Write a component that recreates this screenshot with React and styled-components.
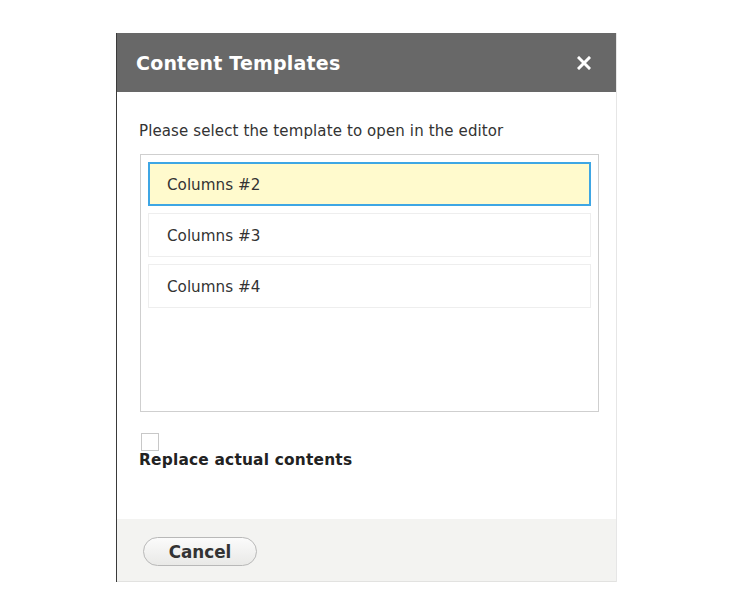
import React, { useState } from 'react';
import styled, { createGlobalStyle } from 'styled-components';

const GlobalStyle = createGlobalStyle`
  body {
    margin: 0;
    background: #fff;
    font-family: "DejaVu Sans", "Liberation Sans", sans-serif;
    color: #333;
  }
`

const Page = styled.div`
  padding: 33px 0 0 116px;
`

const Dialog = styled.div`
  width: 499px;
  background: #fff;
  border-left: 1px solid #3a3a3a;
  border-right: 1px solid #e6e6e6;
  display: flex;
  flex-direction: column;
`

const Header = styled.div`
  height: 59px;
  background: #686868;
  display: flex;
  align-items: center;
  justify-content: space-between;
  padding: 0 23px 0 19px;
`

const Title = styled.h1`
  margin: 0;
  font-size: 19px;
  font-weight: bold;
  color: #fff;
  letter-spacing: 0.2px;
`

const CloseButton = styled.button`
  border: none;
  background: none;
  padding: 0;
  width: 18px;
  height: 18px;
  display: flex;
  align-items: center;
  justify-content: center;
  cursor: pointer;
`

const Body = styled.div`
  padding: 29px 17px 50px 22px;
  display: flex;
  flex-direction: column;
`

const Intro = styled.p`
  margin: 0 0 13px;
  font-size: 15px;
  line-height: 20px;
  letter-spacing: 0.12px;
  color: #333;
`

const ListBox = styled.div`
  margin-left: 1px;
  height: 242px;
  border: 1px solid #cfcfcf;
  padding: 7px;
  display: flex;
  flex-direction: column;
  gap: 7px;
`

const Item = styled.div`
  height: 44px;
  box-sizing: border-box;
  display: flex;
  align-items: center;
  padding: ${p => (p.$active ? '1px 0 0 17px' : '1px 0 0 18px')};
  font-size: 15.2px;
  color: #333;
  background: ${p => (p.$active ? '#fffacd' : '#fff')};
  border: ${p => (p.$active ? '2px solid #3ea6e4' : '1px solid #eeeeee')};
  cursor: pointer;
`

const CheckRow = styled.label`
  margin-top: 21px;
  display: flex;
  flex-direction: column;
  align-items: flex-start;
  cursor: pointer;
`

const Box = styled.span`
  width: 16px;
  height: 16px;
  margin-left: 2px;
  border: 1px solid #c8c8c8;
  background: #fff;
  font-size: 12px;
  line-height: 16px;
  text-align: center;
`

const CheckLabel = styled.span`
  font-size: 15.4px;
  font-weight: bold;
  color: #222;
  line-height: 18px;
  letter-spacing: 0.2px;
`

const Footer = styled.div`
  height: 63px;
  box-sizing: border-box;
  background: #f3f3f1;
  padding: 18px 0 0 26px;
  border-bottom: 1px solid #e2e2e0;
`

const Button = styled.button`
  width: 114px;
  height: 29px;
  border-radius: 15px;
  border: 1px solid #b8b8b8;
  background: linear-gradient(#fbfbfb, #e9e9e7);
  font-family: "DejaVu Sans", "Liberation Sans", sans-serif;
  font-size: 16.8px;
  font-weight: bold;
  color: #333;
  cursor: pointer;
`

const templates = ['Columns #2', 'Columns #3', 'Columns #4']

export default function App() {
  const [selected, setSelected] = useState(0)
  const [replace, setReplace] = useState(false)

  return (
    <>
      <GlobalStyle />
      <Page>
        <Dialog>
          <Header>
            <Title>Content Templates</Title>
            <CloseButton aria-label="Close">
              <svg width="14" height="14" viewBox="0 0 14 14">
                <path d="M2 2 L12 12 M12 2 L2 12" stroke="#fff" strokeWidth="3" strokeLinecap="square" />
              </svg>
            </CloseButton>
          </Header>
          <Body>
            <Intro>Please select the template to open in the editor</Intro>
            <ListBox>
              {templates.map((t, i) => (
                <Item key={t} $active={i === selected} onClick={() => setSelected(i)}>
                  {t}
                </Item>
              ))}
            </ListBox>
            <CheckRow onClick={() => setReplace(!replace)}>
              <Box>{replace ? '✓' : ''}</Box>
              <CheckLabel>Replace actual contents</CheckLabel>
            </CheckRow>
          </Body>
          <Footer>
            <Button>Cancel</Button>
          </Footer>
        </Dialog>
      </Page>
    </>
  )
}
